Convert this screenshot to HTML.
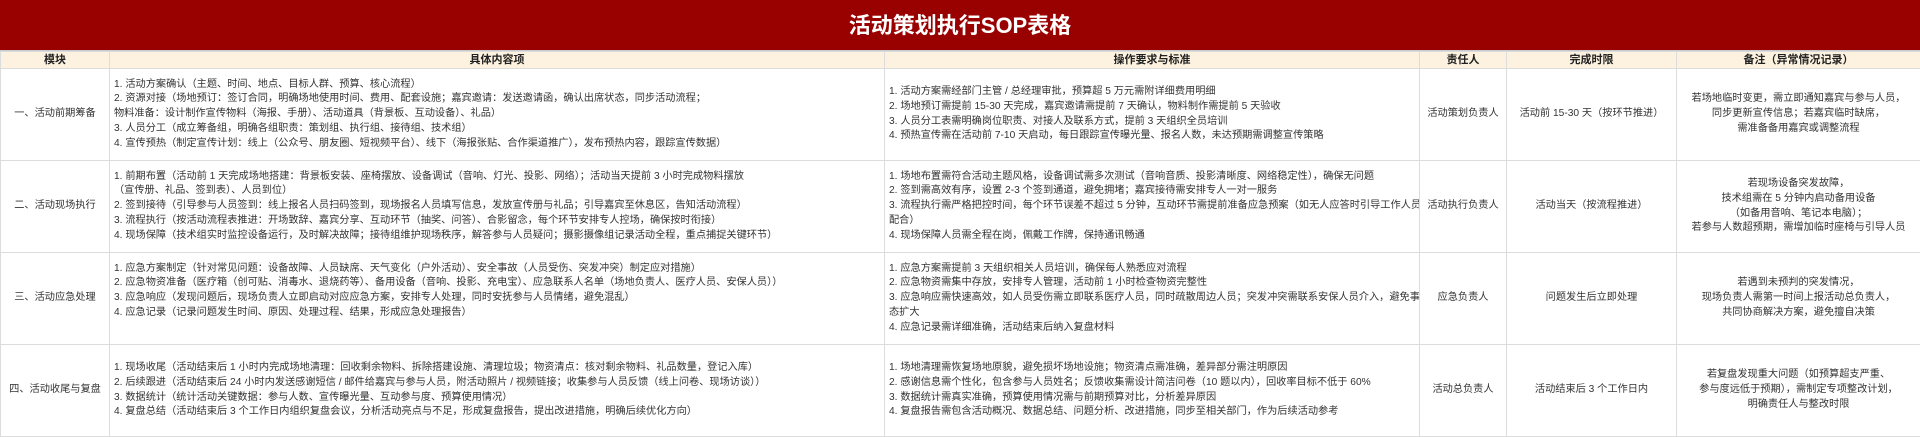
<!DOCTYPE html>
<html><head><meta charset="utf-8"><style>
*{margin:0;padding:0;box-sizing:border-box}
body{width:1920px;height:437px;background:#fff;font-family:"Liberation Sans","Noto Sans CJK SC",sans-serif;color:#333;overflow:hidden}
.title{height:51px;background:#990000;color:#fff;font-weight:bold;font-size:22px;text-align:center;line-height:51px;border-bottom:1px solid #c9c9c9}
table{border-collapse:collapse;table-layout:fixed;width:1920px}
td,th{border:1px solid #dcdcdc;font-size:10.2px;line-height:14.7px;vertical-align:middle;white-space:nowrap;overflow:hidden}
th{background:#fdf2df;font-weight:bold;font-size:11px;height:17px;line-height:15px;color:#222}
td{padding:0 4px}
.c{text-align:center}
.l{text-align:left}
</style></head><body>
<div class="title">活动策划执行SOP表格</div>
<table>
<colgroup><col style="width:109px"><col style="width:775px"><col style="width:535px"><col style="width:87px"><col style="width:170px"><col style="width:244px"></colgroup>
<tr><th>模块</th><th>具体内容项</th><th>操作要求与标准</th><th>责任人</th><th>完成时限</th><th>备注（异常情况记录）</th></tr>
<tr style="height:92px"><td class="c">一、活动前期筹备</td>
<td class="l">1. 活动方案确认（主题、时间、地点、目标人群、预算、核心流程）<br>2. 资源对接（场地预订：签订合同，明确场地使用时间、费用、配套设施；嘉宾邀请：发送邀请函，确认出席状态，同步活动流程；<br>物料准备：设计制作宣传物料（海报、手册）、活动道具（背景板、互动设备）、礼品）<br>3. 人员分工（成立筹备组，明确各组职责：策划组、执行组、接待组、技术组）<br>4. 宣传预热（制定宣传计划：线上（公众号、朋友圈、短视频平台）、线下（海报张贴、合作渠道推广），发布预热内容，跟踪宣传数据）</td>
<td class="l">1. 活动方案需经部门主管 / 总经理审批，预算超 5 万元需附详细费用明细<br>2. 场地预订需提前 15-30 天完成，嘉宾邀请需提前 7 天确认，物料制作需提前 5 天验收<br>3. 人员分工表需明确岗位职责、对接人及联系方式，提前 3 天组织全员培训<br>4. 预热宣传需在活动前 7-10 天启动，每日跟踪宣传曝光量、报名人数，未达预期需调整宣传策略</td>
<td class="c">活动策划负责人</td><td class="c">活动前 15-30 天（按环节推进）</td>
<td class="c">若场地临时变更，需立即通知嘉宾与参与人员，<br>同步更新宣传信息；若嘉宾临时缺席，<br>需准备备用嘉宾或调整流程</td></tr>
<tr style="height:92px"><td class="c">二、活动现场执行</td>
<td class="l">1. 前期布置（活动前 1 天完成场地搭建：背景板安装、座椅摆放、设备调试（音响、灯光、投影、网络）；活动当天提前 3 小时完成物料摆放<br>（宣传册、礼品、签到表）、人员到位）<br>2. 签到接待（引导参与人员签到：线上报名人员扫码签到，现场报名人员填写信息，发放宣传册与礼品；引导嘉宾至休息区，告知活动流程）<br>3. 流程执行（按活动流程表推进：开场致辞、嘉宾分享、互动环节（抽奖、问答）、合影留念，每个环节安排专人控场，确保按时衔接）<br>4. 现场保障（技术组实时监控设备运行，及时解决故障；接待组维护现场秩序，解答参与人员疑问；摄影摄像组记录活动全程，重点捕捉关键环节）</td>
<td class="l">1. 场地布置需符合活动主题风格，设备调试需多次测试（音响音质、投影清晰度、网络稳定性），确保无问题<br>2. 签到需高效有序，设置 2-3 个签到通道，避免拥堵；嘉宾接待需安排专人一对一服务<br>3. 流程执行需严格把控时间，每个环节误差不超过 5 分钟，互动环节需提前准备应急预案（如无人应答时引导工作人员<br>配合）<br>4. 现场保障人员需全程在岗，佩戴工作牌，保持通讯畅通</td>
<td class="c">活动执行负责人</td><td class="c">活动当天（按流程推进）</td>
<td class="c">若现场设备突发故障，<br>技术组需在 5 分钟内启动备用设备<br>（如备用音响、笔记本电脑）；<br>若参与人数超预期，需增加临时座椅与引导人员</td></tr>
<tr style="height:92px"><td class="c">三、活动应急处理</td>
<td class="l">1. 应急方案制定（针对常见问题：设备故障、人员缺席、天气变化（户外活动）、安全事故（人员受伤、突发冲突）制定应对措施）<br>2. 应急物资准备（医疗箱（创可贴、消毒水、退烧药等）、备用设备（音响、投影、充电宝）、应急联系人名单（场地负责人、医疗人员、安保人员））<br>3. 应急响应（发现问题后，现场负责人立即启动对应应急方案，安排专人处理，同时安抚参与人员情绪，避免混乱）<br>4. 应急记录（记录问题发生时间、原因、处理过程、结果，形成应急处理报告）<br>&nbsp;</td>
<td class="l">1. 应急方案需提前 3 天组织相关人员培训，确保每人熟悉应对流程<br>2. 应急物资需集中存放，安排专人管理，活动前 1 小时检查物资完整性<br>3. 应急响应需快速高效，如人员受伤需立即联系医疗人员，同时疏散周边人员；突发冲突需联系安保人员介入，避免事<br>态扩大<br>4. 应急记录需详细准确，活动结束后纳入复盘材料</td>
<td class="c">应急负责人</td><td class="c">问题发生后立即处理</td>
<td class="c">若遇到未预判的突发情况，<br>现场负责人需第一时间上报活动总负责人，<br>共同协商解决方案，避免擅自决策</td></tr>
<tr style="height:92px"><td class="c">四、活动收尾与复盘</td>
<td class="l">1. 现场收尾（活动结束后 1 小时内完成场地清理：回收剩余物料、拆除搭建设施、清理垃圾；物资清点：核对剩余物料、礼品数量，登记入库）<br>2. 后续跟进（活动结束后 24 小时内发送感谢短信 / 邮件给嘉宾与参与人员，附活动照片 / 视频链接；收集参与人员反馈（线上问卷、现场访谈））<br>3. 数据统计（统计活动关键数据：参与人数、宣传曝光量、互动参与度、预算使用情况）<br>4. 复盘总结（活动结束后 3 个工作日内组织复盘会议，分析活动亮点与不足，形成复盘报告，提出改进措施，明确后续优化方向）</td>
<td class="l">1. 场地清理需恢复场地原貌，避免损坏场地设施；物资清点需准确，差异部分需注明原因<br>2. 感谢信息需个性化，包含参与人员姓名；反馈收集需设计简洁问卷（10 题以内），回收率目标不低于 60%<br>3. 数据统计需真实准确，预算使用情况需与前期预算对比，分析差异原因<br>4. 复盘报告需包含活动概况、数据总结、问题分析、改进措施，同步至相关部门，作为后续活动参考</td>
<td class="c">活动总负责人</td><td class="c">活动结束后 3 个工作日内</td>
<td class="c">若复盘发现重大问题（如预算超支严重、<br>参与度远低于预期），需制定专项整改计划，<br>明确责任人与整改时限</td></tr>
</table>
</body></html>
